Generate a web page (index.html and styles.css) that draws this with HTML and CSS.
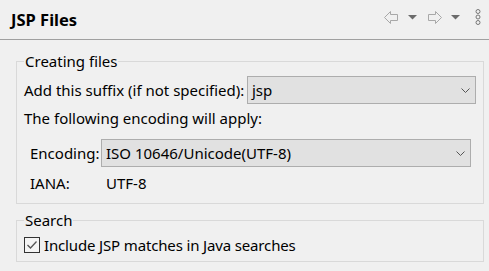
FILE: index.html
```html
<!DOCTYPE html>
<html>
<head>
<meta charset="utf-8">
<link rel="stylesheet" href="styles.css">
</head>
<body>
<div class="header">
  <div class="title">JSP Files</div>
  <div class="tools">
    <svg class="ico arrow" width="15" height="13" viewBox="0 0 15 13"><path d="M0.5 6.5 L6.5 0.5 L6.5 3.5 L13.5 3.5 L13.5 9.5 L6.5 9.5 L6.5 12.5 Z" fill="none" stroke="#a8a8a8" stroke-width="1"/></svg>
    <svg class="ico tri" width="9" height="5" viewBox="0 0 9 5"><path d="M0 0 L9 0 L4.5 4.5 Z" fill="#6b6b6b"/></svg>
    <svg class="ico arrow" width="15" height="13" viewBox="0 0 15 13"><path d="M14.5 6.5 L8.5 0.5 L8.5 3.5 L1.5 3.5 L1.5 9.5 L8.5 9.5 L8.5 12.5 Z" fill="none" stroke="#a8a8a8" stroke-width="1"/></svg>
    <svg class="ico tri" width="9" height="5" viewBox="0 0 9 5"><path d="M0 0 L9 0 L4.5 4.5 Z" fill="#6b6b6b"/></svg>
    <svg class="ico dots" width="6" height="16" viewBox="0 0 6 16"><circle cx="3" cy="2.5" r="2" fill="none" stroke="#777" stroke-width="1"/><circle cx="3" cy="8" r="2" fill="none" stroke="#777" stroke-width="1"/><circle cx="3" cy="13.5" r="2" fill="none" stroke="#777" stroke-width="1"/></svg>
  </div>
</div>

<fieldset class="group first">
  <legend>Creating files</legend>
  <div class="row suffix">
    <span class="label">Add this suffix (if not specified):</span>
    <div class="combo"><span>jsp</span><svg class="chev" width="9" height="5" viewBox="0 0 9 5"><path d="M0.5 0.5 L4.5 4.5 L8.5 0.5" fill="none" stroke="#555" stroke-width="1"/></svg></div>
  </div>
  <div class="row text">The following encoding will apply:</div>
  <div class="enc">
    <div class="row erow">
      <span class="label">Encoding:</span>
      <div class="combo"><span>ISO 10646/Unicode(UTF-8)</span><svg class="chev" width="9" height="5" viewBox="0 0 9 5"><path d="M0.5 0.5 L4.5 4.5 L8.5 0.5" fill="none" stroke="#555" stroke-width="1"/></svg></div>
    </div>
    <div class="row iana">
      <span class="label">IANA:</span>
      <span class="value">UTF-8</span>
    </div>
  </div>
</fieldset>

<fieldset class="group second">
  <legend>Search</legend>
  <label class="row check">
    <span class="box"><svg width="14" height="14" viewBox="0 0 14 14"><path d="M2.5 7 L5.5 10 L11.5 3.5" fill="none" stroke="#555" stroke-width="1.3"/></svg></span>
    <span class="cbtext">Include JSP matches in Java searches</span>
  </label>
</fieldset>
</body>
</html>
```

FILE: styles.css
```css
html, body {
  margin: 0;
  padding: 0;
  background: #f0f0f0;
}
body {
  width: 489px;
  height: 271px;
  overflow: hidden;
  font-family: "Noto Sans", "Open Sans", sans-serif;
  font-size: 15px;
  color: #000;
}
.header {
  height: 39px;
  border-bottom: 1px solid #a0a0a0;
  display: flex;
  align-items: center;
  justify-content: space-between;
}
.title {
  padding-left: 11px;
  font-weight: bold;
  font-size: 16.5px;
  line-height: 39px;
}
.tools {
  display: flex;
  align-items: center;
  padding-right: 8px;
  margin-top: -5px;
}
.ico { display: block; }
.arrow + .tri { margin-left: 9px; }
.tri + .arrow { margin-left: 10px; }
.tri + .dots { margin-left: 15px; }

.group {
  margin: 0 5px 0 16px;
  padding: 0 7px;
  border: 1px solid #d9d9d9;
  min-width: 0;
}
.group legend {
  padding: 0 1px;
  line-height: 20px;
}
.first { margin-top: 11px; padding-bottom: 10px; }
.second { margin-top: 6px; padding-bottom: 6px; }

.row {
  display: flex;
  align-items: center;
}
.suffix {
  display: grid;
  grid-template-columns: 223px 1fr;
  height: 28px;
  margin-top: 5px;
}
.text {
  height: 20px;
  margin-top: 4px;
}
.enc {
  margin: 0 5px 0 6px;
}
.erow, .iana {
  display: grid;
  grid-template-columns: 71px 1fr;
  align-items: center;
}
.erow {
  height: 28px;
  margin-top: 11px;
}
.iana {
  height: 20px;
  margin-top: 6px;
}
.value { padding-left: 5px; }
.combo {
  height: 28px;
  box-sizing: border-box;
  border: 1px solid #adadad;
  background: #e1e1e1;
  display: flex;
  align-items: center;
  justify-content: space-between;
  padding: 0 5px 0 4px;
}
.chev { display: block; }
.check {
  height: 21px;
  margin-top: 4px;
}
.cbtext { letter-spacing: -0.15px; }
.box {
  width: 16px;
  height: 16px;
  box-sizing: border-box;
  border: 1px solid #333;
  background: #f4f4f4;
  display: flex;
  align-items: center;
  justify-content: center;
  margin-right: 4px;
}
.box svg { display: block; }
```
